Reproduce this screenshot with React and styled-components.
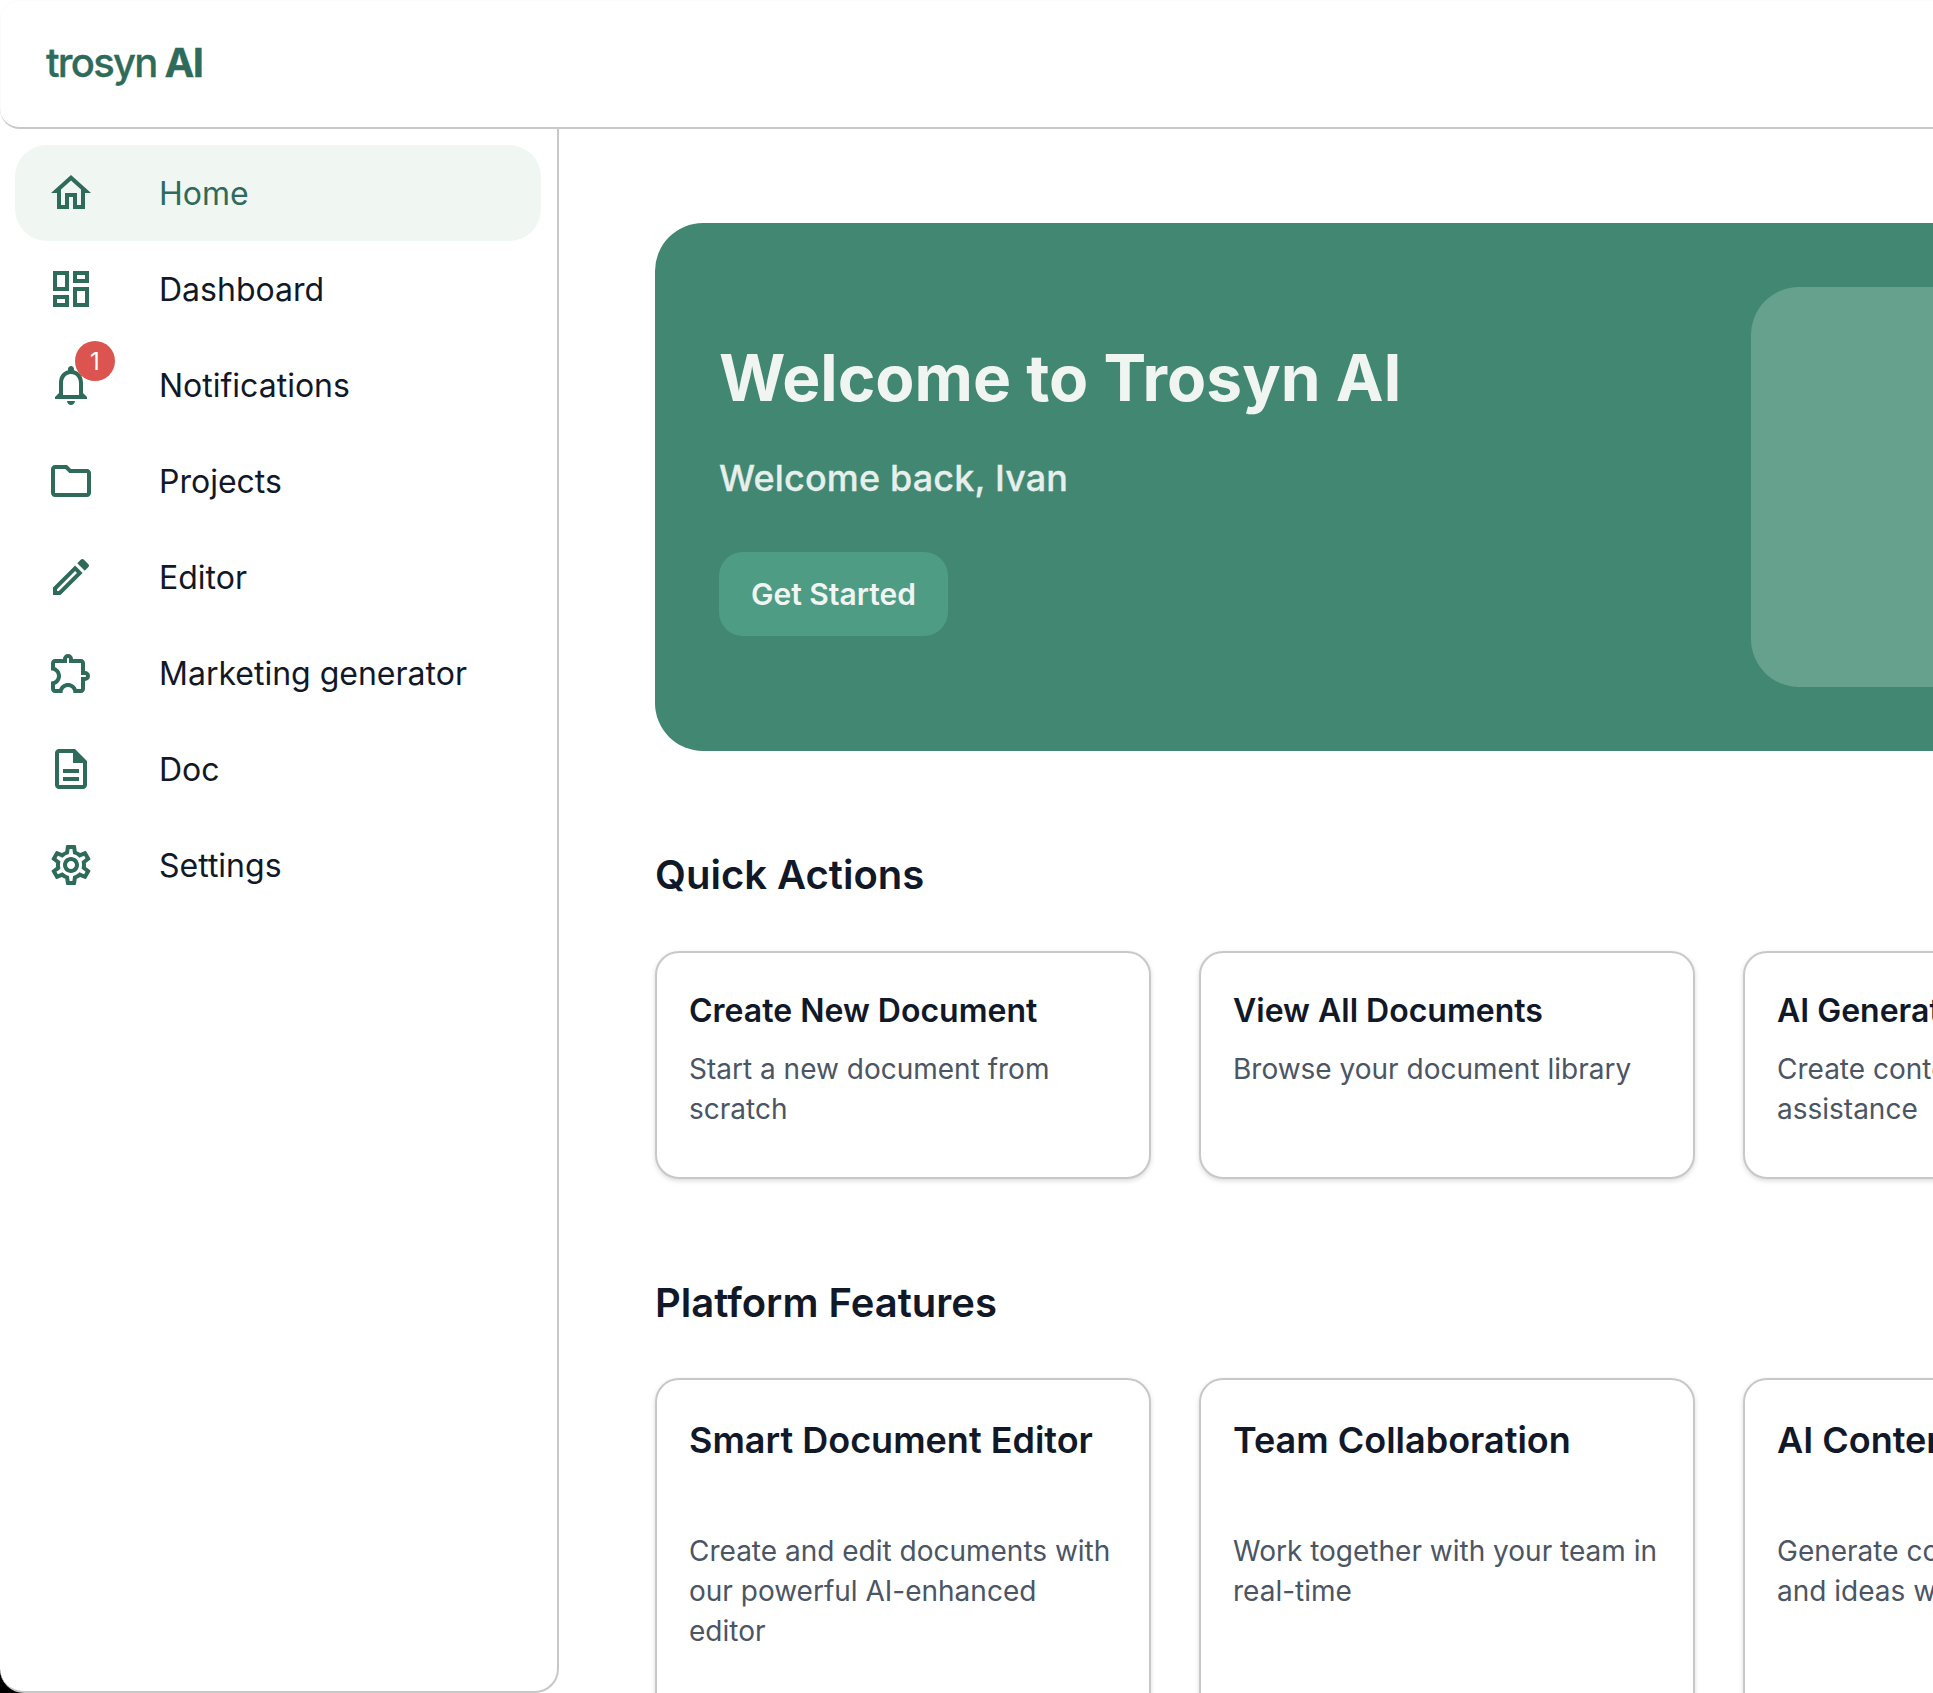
import React from 'react';
import styled, { createGlobalStyle } from 'styled-components';
import {
  MdOutlineHome,
  MdOutlineDashboard,
  MdOutlineNotifications,
  MdOutlineFolder,
  MdOutlineEdit,
  MdOutlineExtension,
  MdOutlineDescription,
  MdOutlineSettings
} from 'react-icons/md';

const GlobalStyle = createGlobalStyle`
  html, body {
    margin: 0;
    height: 100%;
    background: #fff;
    font-family: Inter, "Liberation Sans", sans-serif;
    overflow: hidden;
  }
  * {
    box-sizing: border-box;
  }
`;

const StyledPage = styled.div`
  display: flex;
  flex-direction: column;
  height: 100vh;
  overflow: hidden;
`;

const StyledHeader = styled.header`
  flex: none;
  display: flex;
  align-items: center;
  height: 129px;
  padding-left: 46px;
  border-bottom: 2px solid #c8c8c8;
  border-radius: 20px 0 0 20px;
  background: #fff;
  box-shadow: inset 1px 0 0 #fbfbfb, inset 0 1px 0 #fbfbfb;
`;

const StyledLogo = styled.div`
  font-size: 40px;
  line-height: 1;
  font-weight: 500;
  letter-spacing: -1.75px;
  color: #2f6b5a;
  padding-bottom: 2px;
  -webkit-text-stroke: 0.3px #2f6b5a;

  b {
    font-weight: 700;
    margin-left: -1px;
  }
`;

const StyledBody = styled.div`
  flex: 1;
  min-height: 0;
  display: flex;
  background: linear-gradient(to right, #000 5%, #fff 5%);
`;

const StyledSidebar = styled.aside`
  flex: none;
  width: 559px;
  display: flex;
  flex-direction: column;
  padding: 16px 15px 0;
  background: #fff;
  border-right: 2px solid #c8c8c8;
  border-bottom: 2px solid #c8c8c8;
  border-radius: 0 0 24px 24px;
`;

const StyledNavItem = styled.div`
  flex: none;
  display: flex;
  align-items: center;
  width: 526px;
  height: 96px;
  padding-left: 32px;
  border-radius: 32px;
  font-size: 32px;
  color: ${({ active }) => (active ? '#2f6b5a' : '#111827')};
  background: ${({ active }) => (active ? '#f0f7f2' : 'transparent')};
`;

const StyledIconSlot = styled.span`
  position: relative;
  flex: none;
  display: flex;
  width: 48px;
  height: 48px;
  margin-right: 64px;
  color: #2f6b5a;
  font-size: 48px;
`;

const StyledBadge = styled.span`
  position: absolute;
  top: -20px;
  right: -20px;
  display: flex;
  align-items: center;
  justify-content: center;
  width: 40px;
  height: 40px;
  border-radius: 50%;
  background: #dc5450;
  color: #fff;
  font-size: 24px;
`;

const StyledMain = styled.main`
  flex: 1;
  min-width: 0;
  padding: 94px 0 0 96px;
  overflow: hidden;
  background: #fff;
`;

const StyledHero = styled.section`
  display: flex;
  justify-content: space-between;
  width: 1600px;
  height: 528px;
  padding: 64px;
  border-radius: 48px;
  background: #418772;
`;

const StyledHeroText = styled.div`
  color: #f0f5f2;
`;

const StyledHeroTitle = styled.h1`
  margin: 0;
  padding-top: 55px;
  font-size: 64px;
  line-height: 72px;
  font-weight: 700;
`;

const StyledHeroSub = styled.p`
  margin: 42px 0 0;
  font-size: 36px;
  line-height: 44px;
  font-weight: 500;
  letter-spacing: 0.15px;
  color: #e6efeb;
  -webkit-text-stroke: 0.3px #e6efeb;
`;

const StyledButton = styled.button`
  display: block;
  width: 229px;
  height: 84px;
  margin-top: 52px;
  padding: 0;
  border: none;
  border-radius: 24px;
  background: #4f9c85;
  color: #f0f5f2;
  font-family: inherit;
  font-size: 30px;
  font-weight: 600;
`;

const StyledHeroPanel = styled.div`
  flex: none;
  width: 440px;
  height: 400px;
  border-radius: 48px;
  background: #66a18e;
`;

const StyledSectionTitle = styled.h2`
  margin: 0;
  font-size: 40px;
  line-height: 48px;
  font-weight: 600;
  color: #111827;
  padding-top: ${({ top }) => top}px;
`;

const StyledCardGrid = styled.div`
  display: grid;
  grid-template-columns: repeat(3, 496px);
  column-gap: 48px;
  margin-top: ${({ top }) => top}px;
`;

const StyledCard = styled.div`
  min-height: ${({ minHeight }) => minHeight}px;
  padding: 32px;
  border: 2px solid #c8c8c8;
  border-radius: 24px;
  background: #fff;
  box-shadow: 0 2px 5px rgba(0, 0, 0, 0.14);
`;

const StyledCardTitle = styled.h3`
  margin: 4px 0 0;
  font-size: 32px;
  line-height: 44px;
  font-weight: 600;
  color: #111827;
`;

const StyledFeatureTitle = styled(StyledCardTitle)`
  margin: 0 0 67px;
  padding-top: 4px;
  font-size: 36px;
  line-height: 48px;
`;

const StyledCardText = styled.p`
  margin: 16px 0 0;
  font-size: 28px;
  line-height: 40px;
  color: #4b5563;
`;

const StyledFeatureText = styled(StyledCardText)`
  margin: 0;
`;

const navItems = [
  { label: 'Home', Icon: MdOutlineHome, active: true },
  { label: 'Dashboard', Icon: MdOutlineDashboard },
  { label: 'Notifications', Icon: MdOutlineNotifications, badge: 1 },
  { label: 'Projects', Icon: MdOutlineFolder },
  { label: 'Editor', Icon: MdOutlineEdit },
  { label: 'Marketing generator', Icon: MdOutlineExtension },
  { label: 'Doc', Icon: MdOutlineDescription },
  { label: 'Settings', Icon: MdOutlineSettings }
];

const quickActions = [
  { title: 'Create New Document', text: 'Start a new document from scratch' },
  { title: 'View All Documents', text: 'Browse your document library' },
  { title: 'AI Generate', text: 'Create content with AI assistance' }
];

const features = [
  { title: 'Smart Document Editor', text: 'Create and edit documents with our powerful AI-enhanced editor' },
  { title: 'Team Collaboration', text: 'Work together with your team in real-time' },
  { title: 'AI Content Generation', text: 'Generate content, summaries, and ideas with AI' }
];

const App = () => (
  <StyledPage>
    <GlobalStyle />
    <StyledHeader>
      <StyledLogo>trosyn <b>AI</b></StyledLogo>
    </StyledHeader>
    <StyledBody>
      <StyledSidebar>
        {navItems.map(({ label, Icon, active, badge }) => (
          <StyledNavItem key={label} active={active}>
            <StyledIconSlot>
              <Icon />
              {badge && <StyledBadge>{badge}</StyledBadge>}
            </StyledIconSlot>
            {label}
          </StyledNavItem>
        ))}
      </StyledSidebar>
      <StyledMain>
        <StyledHero>
          <StyledHeroText>
            <StyledHeroTitle>Welcome to Trosyn AI</StyledHeroTitle>
            <StyledHeroSub>Welcome back, Ivan</StyledHeroSub>
            <StyledButton>Get Started</StyledButton>
          </StyledHeroText>
          <StyledHeroPanel />
        </StyledHero>

        <StyledSectionTitle top={100}>Quick Actions</StyledSectionTitle>
        <StyledCardGrid top={52}>
          {quickActions.map(card => (
            <StyledCard key={card.title} minHeight={228}>
              <StyledCardTitle>{card.title}</StyledCardTitle>
              <StyledCardText>{card.text}</StyledCardText>
            </StyledCard>
          ))}
        </StyledCardGrid>

        <StyledSectionTitle top={100}>Platform Features</StyledSectionTitle>
        <StyledCardGrid top={51}>
          {features.map(card => (
            <StyledCard key={card.title} minHeight={360}>
              <StyledFeatureTitle>{card.title}</StyledFeatureTitle>
              <StyledFeatureText>{card.text}</StyledFeatureText>
            </StyledCard>
          ))}
        </StyledCardGrid>
      </StyledMain>
    </StyledBody>
  </StyledPage>
);

export default App;
